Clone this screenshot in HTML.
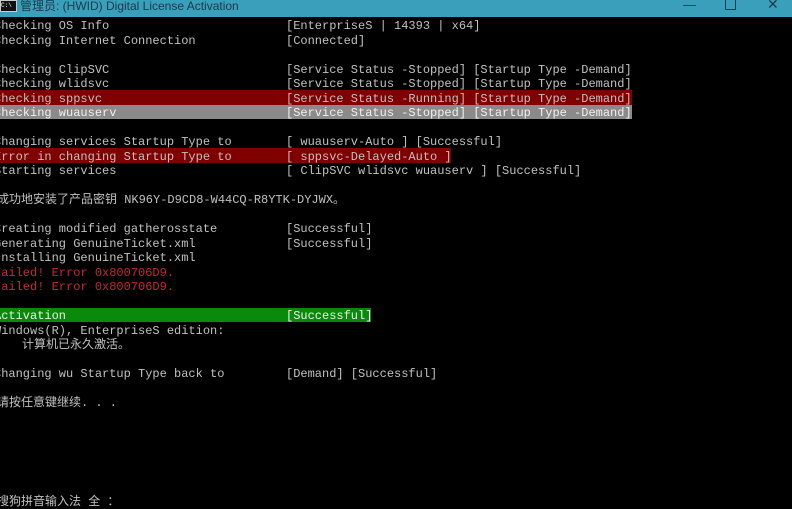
<!DOCTYPE html>
<html><head><meta charset="utf-8"><style>
html,body{margin:0;padding:0;background:#000;width:792px;height:508px;overflow:hidden}
#tb{position:absolute;left:0;top:0;width:792px;height:17px;background:#3a9fbb;font-family:"Liberation Sans","Noto Sans CJK SC",sans-serif;font-size:12px;color:#1a3a48}
#tb .t{position:absolute;left:20px;top:-3px;white-space:nowrap}
#ic{position:absolute;left:0;top:0;width:15px;height:10px;background:#111;border:1px solid #ccc;font-size:6px;color:#fff;line-height:9px;font-family:"Liberation Mono",monospace}
.l{position:absolute;left:0;height:14.5px;font-family:"Liberation Mono","Noto Sans CJK SC",monospace;font-size:12px;line-height:14.5px;color:#c0c0c0;white-space:pre}
.a{position:absolute;left:-6px;top:1.5px}
.b{position:absolute;left:286px;top:1.5px}
.c{position:absolute;left:-3px;top:1.5px}
.bg{position:absolute;left:0;top:0;height:14.5px}
.r{color:#c52a2a}
</style></head><body>
<div id="tb"><div id="ic">C:\</div><span class="t">管理员:  (HWID) Digital License Activation</span>
<span style="position:absolute;left:683px;top:-3px;font-size:13px">—</span>
<span style="position:absolute;left:725px;top:0px;width:9px;height:9px;border:1px solid #1a3a48;border-top:none"></span>
<span style="position:absolute;left:767px;top:-4px;font-size:14px">✕</span></div>

<div class="l" style="top:17.75px"><span class="a">Checking OS Info</span><span class="b">[EnterpriseS | 14393 | x64]</span></div>
<div class="l" style="top:32.25px"><span class="a">Checking Internet Connection</span><span class="b">[Connected]</span></div>
<div class="l" style="top:61.25px"><span class="a">Checking ClipSVC</span><span class="b">[Service Status -Stopped] [Startup Type -Demand]</span></div>
<div class="l" style="top:75.75px"><span class="a">Checking wlidsvc</span><span class="b">[Service Status -Stopped] [Startup Type -Demand]</span></div>
<div class="l" style="top:90.25px"><div class="bg" style="width:632px;background:#800000"></div><span class="a">Checking sppsvc</span><span class="b">[Service Status -Running] [Startup Type -Demand]</span></div>
<div class="l" style="top:104.75px"><div class="bg" style="width:632px;background:#8a8a8a"></div><span class="a" style="color:#f0f0f0">Checking wuauserv</span><span class="b" style="color:#f0f0f0">[Service Status -Stopped] [Startup Type -Demand]</span></div>
<div class="l" style="top:133.75px"><span class="a">Changing services Startup Type to</span><span class="b">[ wuauserv-Auto ] [Successful]</span></div>
<div class="l" style="top:148.25px"><div class="bg" style="width:451px;background:#800000"></div><span class="a">Error in changing Startup Type to</span><span class="b">[ sppsvc-Delayed-Auto ]</span></div>
<div class="l" style="top:162.75px"><span class="a">Starting services</span><span class="b">[ ClipSVC wlidsvc wuauserv ] [Successful]</span></div>
<div class="l" style="top:191.75px"><span class="c">成功地安装了产品密钥 NK96Y-D9CD8-W44CQ-R8YTK-DYJWX。</span></div>
<div class="l" style="top:220.75px"><span class="a">Creating modified gatherosstate</span><span class="b">[Successful]</span></div>
<div class="l" style="top:235.25px"><span class="a">Generating GenuineTicket.xml</span><span class="b">[Successful]</span></div>
<div class="l" style="top:249.75px"><span class="a">Installing GenuineTicket.xml</span></div>
<div class="l r" style="top:264.25px"><span class="a">Failed! Error 0x800706D9.</span></div>
<div class="l r" style="top:278.75px"><span class="a">Failed! Error 0x800706D9.</span></div>
<div class="l" style="top:307.75px"><div class="bg" style="width:371px;background:#0a8a0a"></div><span class="a" style="color:#f0f0f0">Activation</span><span class="b" style="color:#f0f0f0">[Successful]</span></div>
<div class="l" style="top:322.25px"><span class="a">Windows(R), EnterpriseS edition:</span></div>
<div class="l" style="top:336.75px"><span style="position:absolute;left:22px;top:1.5px">计算机已永久激活。</span></div>
<div class="l" style="top:365.75px"><span class="a">Changing wu Startup Type back to</span><span class="b">[Demand] [Successful]</span></div>
<div class="l" style="top:394.75px"><span class="c">请按任意键继续. . .</span></div>
<div class="l" style="top:493px"><span class="c">搜狗拼音输入法 全 ：</span></div>
</body></html>
